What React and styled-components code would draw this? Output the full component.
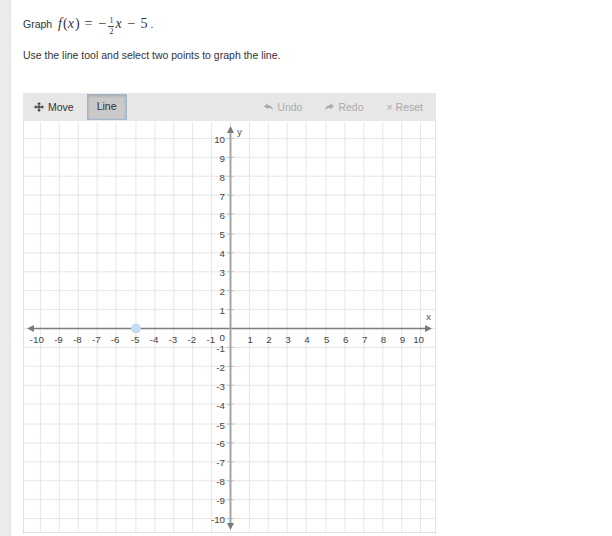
import React from 'react'
import styled, { createGlobalStyle } from 'styled-components'

// Graph geometry (svg coordinates)
const SIZE = 413
const CX = 207
const CY = 207
const UNIT = 19.1
const ticks = Array.from({ length: 21 }, (_, i) => i - 10)
const px = (v) => Math.round(CX + v * UNIT) + 0.5
const py = (v) => Math.round(CY - v * UNIT) + 0.5

const GlobalStyle = createGlobalStyle`
    html, body {
        margin: 0;
        padding: 0;
        background: #fff;
        font-family: "Liberation Sans", Arial, sans-serif;
        color: #333;
    }
`

const Page = styled.div`
    display: flex;
    min-height: 536px;
`

const SideStrip = styled.div`
    flex: 0 0 11px;
    background: #ececec;
    border-right: 1px solid #e2e2e2;
    box-sizing: border-box;
`

const Main = styled.main`
    flex: 1;
    padding: 14px 0 0 12px;
    font-size: 10.5px;
`

const Prompt = styled.p`
    margin: 0;
    line-height: 20px;
    height: 20px;
`

const Instruction = styled.p`
    margin: 11px 0 0 0;
    line-height: 20px;
`

const MathSpan = styled.span`
    font-family: "Liberation Serif", "Times New Roman", serif;
    font-size: 14px;
    margin-left: 3px;
`

const Var = styled.i`
    font-style: italic;
    padding-right: 1px;
`

const Op = styled.span`
    padding: 0 ${(p) => (p.$tight ? 1 : 5)}px;
`

const Frac = styled.span`
    display: inline-flex;
    flex-direction: column;
    align-items: center;
    vertical-align: 5px;
    font-size: 8px;
    line-height: 8px;
    margin: 0 1px;
    & > span:first-child {
        border-bottom: 1px solid #444;
        padding: 0 1px 1px;
    }
    & > span:last-child {
        padding-top: 1px;
    }
`

const GraphBox = styled.section`
    width: ${SIZE}px;
    margin-top: 28px;
`

const Toolbar = styled.div`
    display: flex;
    align-items: center;
    height: 28px;
    background: #e7e7e7;
    padding: 0 2px 0 0;
`

const ToolGroup = styled.div`
    display: flex;
    align-items: center;
    gap: ${(p) => p.$gap || 0}px;
    margin-left: ${(p) => (p.$right ? 'auto' : '0')};
`

const ToolButton = styled.button`
    display: flex;
    align-items: center;
    gap: 4px;
    height: 26px;
    padding: 0 10px;
    border: 1px solid transparent;
    background: transparent;
    font-family: "Liberation Sans", Arial, sans-serif;
    font-size: 10.5px;
    color: ${(p) => (p.$disabled ? '#aaa' : '#333')};
    cursor: pointer;
`

const ActiveButton = styled(ToolButton)`
    margin-left: 2px;
    padding: 0 9px 3px;
    background: #c9c9c9;
    border-color: #9db8d3;
    box-shadow: inset 0 1px 3px rgba(0, 0, 0, 0.18);
`

const Board = styled.svg`
    display: block;
    border-left: 1px solid #e2e2e2;
    border-right: 1px solid #e2e2e2;
    box-sizing: border-box;
`

const MoveIcon = () => (
    <svg width="10" height="10" viewBox="0 0 10 10">
        <path d="M5 1.5V8.5M1.5 5H8.5" stroke="#444" strokeWidth="1.3" />
        <path d="M5 0L7 2.2H3ZM5 10L7 7.8H3ZM0 5L2.2 3V7ZM10 5L7.8 3V7Z" fill="#444" />
    </svg>
)

const ReplyIcon = ({ flip }) => (
    <svg width="9" height="8" viewBox="0 0 10 8" style={flip ? { transform: 'scaleX(-1)' } : undefined}>
        <path d="M0 3.2L4 0V1.9C7.5 2 9.6 4.2 10 8C8.8 5.8 7 4.8 4 4.8V6.6Z" fill="#aaa" />
    </svg>
)

const Grid = () => (
    <Board width={SIZE} height={SIZE} viewBox={`0 0 ${SIZE} ${SIZE}`}>
        <g stroke="#e6e6e6" strokeWidth="1">
            {ticks.map((t) => (
                <line key={`v${t}`} x1={px(t)} y1="0" x2={px(t)} y2={SIZE} />
            ))}
            {ticks.map((t) => (
                <line key={`h${t}`} x1="0" y1={py(t)} x2={SIZE} y2={py(t)} />
            ))}
            <line x1="0" y1={SIZE - 0.5} x2={SIZE} y2={SIZE - 0.5} stroke="#e2e2e2" />
        </g>

        {/* tick marks on the y axis */}
        <g stroke="#c4c4c4" strokeWidth="1">
            {ticks.filter((t) => t !== 0).map((t) => (
                <line key={`ty${t}`} x1={CX - 3} y1={py(t)} x2={CX + 4} y2={py(t)} />
            ))}
        </g>

        {/* axes */}
        <line x1="9" y1={CY + 0.5} x2={SIZE - 9} y2={CY + 0.5} stroke="#7d7d7d" strokeWidth="1.4" />
        <line x1={CX + 0.5} y1="10" x2={CX + 0.5} y2={SIZE - 9} stroke="#a3a3a3" strokeWidth="2" />
        <g fill="#7a7a7a">
            <path d={`M3 ${CY + 0.5}L10 ${CY - 3}V${CY + 4}Z`} />
            <path d={`M410 ${CY + 0.5}L403 ${CY - 3}V${CY + 4}Z`} />
            <path d={`M${CX + 0.5} 4L${CX - 3} 11H${CX + 4}Z`} />
            <path d={`M${CX + 0.5} 410L${CX - 3} 403H${CX + 4}Z`} />
        </g>

        {/* labels */}
        <g fontFamily="'Liberation Sans', Arial, sans-serif" fontSize="9.8" fill="#444">
            {ticks.filter((t) => t !== 0).map((t) => (
                <text key={`lx${t}`} x={px(t) + 3.5} y={CY + 15.5} textAnchor="end">{t}</text>
            ))}
            {ticks.filter((t) => t !== 0).map((t) => (
                <text key={`ly${t}`} x={CX - 5} y={py(t) + 4.5} textAnchor="end">{t}</text>
            ))}
            <text x={CX - 5} y={CY + 13} textAnchor="end">0</text>
        </g>
        <g fontFamily="'Liberation Sans', Arial, sans-serif" fontSize="10" fill="#555">
            <text x="404" y="199">x</text>
            <text x="214" y="13">y</text>
        </g>

        <circle cx={px(-5)} cy={CY + 0.5} r="5" fill="#c3dcf3" />
    </Board>
)

export default function App() {
    return (
        <Page>
            <GlobalStyle />
            <SideStrip />
            <Main>
                <Prompt>
                    Graph{' '}
                    <MathSpan>
                        <Var>f</Var>(<Var>x</Var>)<Op>=</Op><Op $tight>−</Op><Frac><span>1</span><span>2</span></Frac><Var>x</Var><Op>−</Op>5
                    </MathSpan>{' '}.
                </Prompt>
                <Instruction>Use the line tool and select two points to graph the line.</Instruction>

                <GraphBox>
                    <Toolbar>
                        <ToolGroup>
                            <ToolButton><MoveIcon />Move</ToolButton>
                            <ActiveButton>Line</ActiveButton>
                        </ToolGroup>
                        <ToolGroup $right $gap={1}>
                            <ToolButton $disabled><ReplyIcon />Undo</ToolButton>
                            <ToolButton $disabled><ReplyIcon flip />Redo</ToolButton>
                            <ToolButton $disabled>× Reset</ToolButton>
                        </ToolGroup>
                    </Toolbar>
                    <Grid />
                </GraphBox>
            </Main>
        </Page>
    )
}
